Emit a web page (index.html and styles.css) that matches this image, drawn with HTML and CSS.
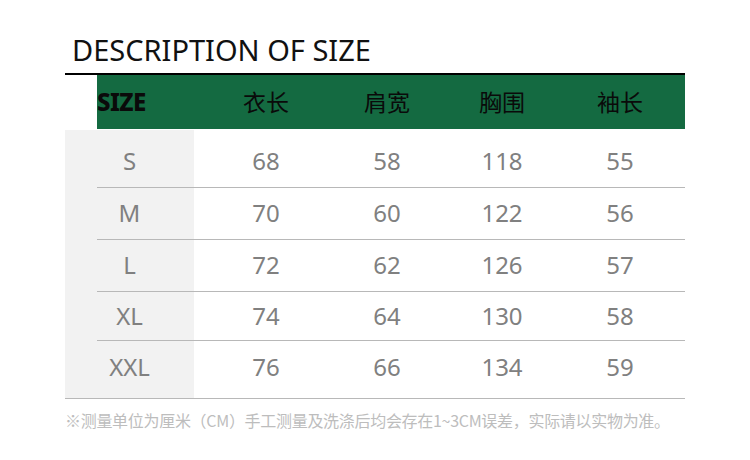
FILE: index.html
```html
<!DOCTYPE html>
<html>
<head>
<meta charset="utf-8">
<link rel="stylesheet" href="styles.css">
</head>
<body>
<div class="page">
  <h1 class="title">DESCRIPTION OF SIZE</h1>
  <div class="rule"></div>
  <div class="head">
    <div class="hcell first">SIZE</div>
    <div class="hcell">衣长</div>
    <div class="hcell">肩宽</div>
    <div class="hcell">胸围</div>
    <div class="hcell">袖长</div>
  </div>
  <div class="body">
    <div class="row r1"><div class="cell size">S</div><div class="cell">68</div><div class="cell">58</div><div class="cell">118</div><div class="cell">55</div></div>
    <div class="row r2"><div class="cell size">M</div><div class="cell">70</div><div class="cell">60</div><div class="cell">122</div><div class="cell">56</div></div>
    <div class="row r3"><div class="cell size">L</div><div class="cell">72</div><div class="cell">62</div><div class="cell">126</div><div class="cell">57</div></div>
    <div class="row r4"><div class="cell size">XL</div><div class="cell">74</div><div class="cell">64</div><div class="cell">130</div><div class="cell">58</div></div>
    <div class="row r5"><div class="cell size">XXL</div><div class="cell">76</div><div class="cell">66</div><div class="cell">134</div><div class="cell">59</div></div>
  </div>
  <p class="note">※测量单位为厘米（CM）手工测量及洗涤后均会存在1~3CM误差，实际请以实物为准。</p>
</div>
</body>
</html>
```
FILE: styles.css
```css
html, body {
  margin: 0;
  padding: 0;
  background: #ffffff;
}
.page {
  width: 620px;
  margin-left: 65px;
  padding-top: 30px;
  font-family: "Noto Sans", "Noto Sans CJK SC", sans-serif;
}
.title {
  margin: 0 0 0 7px;
  font-weight: 400;
  font-size: 29px;
  line-height: 40px;
  height: 43px;
  color: #111111;
  letter-spacing: 0;
}
.rule {
  height: 2px;
  background: #000000;
}
.head {
  margin-left: 32px;
  height: 54px;
  background: #146a41;
  display: grid;
  grid-template-columns: 97px 144px 98px 132px 104px;
  align-items: center;
}
.hcell {
  text-align: center;
  font-family: "Noto Sans CJK SC", sans-serif;
  font-size: 23px;
  line-height: 1;
  padding-bottom: 2px;
  color: #0a0a0a;
}
.hcell.first {
  text-align: left;
  font-family: "Noto Sans", sans-serif;
  font-weight: 800;
  font-size: 24px;
  letter-spacing: -0.6px;
  padding-bottom: 1px;
}
.body {
  margin-top: 1px;
  background: linear-gradient(to right, #f2f2f2 0, #f2f2f2 129px, #ffffff 129px);
  border-bottom: 1px solid #b8b8b8;
}
.row {
  display: grid;
  grid-template-columns: 129px 144px 98px 132px 104px;
  align-items: center;
  position: relative;
}
.row + .row::before {
  content: "";
  position: absolute;
  left: 32px;
  right: 0;
  top: 0;
  height: 1px;
  background: #b8b8b8;
}
.r1 { height: 57px; }
.r2 { height: 52px; }
.r3 { height: 52px; }
.r4 { height: 49px; }
.r5 { height: 58px; }
.cell {
  text-align: center;
  font-size: 24px;
  color: #808080;
  line-height: 1;
}
.r1 .cell { padding-top: 4px; }
.r5 .cell { padding-bottom: 4px; }
.note {
  margin: 11px 0 0 0;
  font-family: "Noto Sans CJK SC", sans-serif;
  font-size: 16px;
  line-height: 20px;
  color: #bdbdbd;
  letter-spacing: -0.3px;
  white-space: nowrap;
}
```
